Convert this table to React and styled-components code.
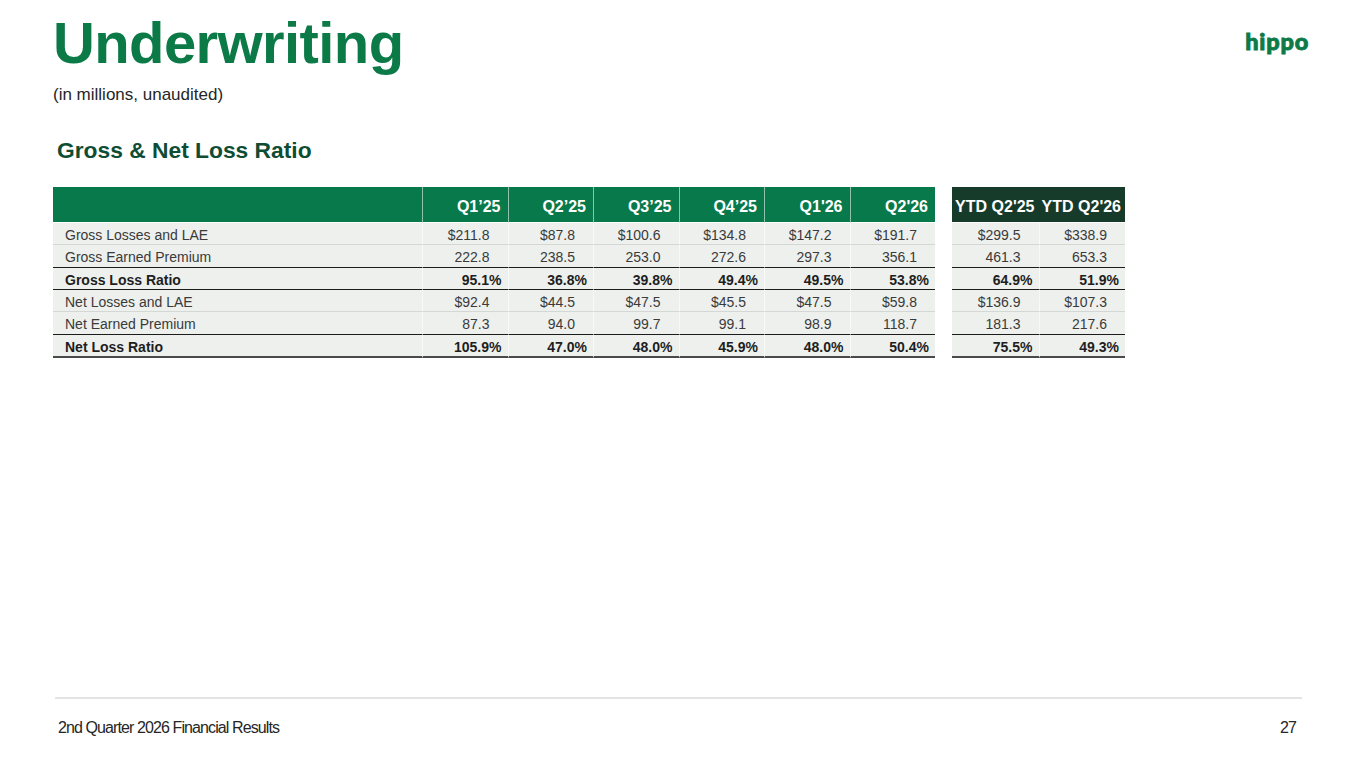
import React from "react";
import styled, { createGlobalStyle } from "styled-components";

const GlobalStyle = createGlobalStyle`
  html, body { margin: 0; padding: 0; background: #ffffff; }
  body { font-family: "Liberation Sans", Arial, sans-serif; }
  * { box-sizing: border-box; }
`;

const Page = styled.div`
  width: 1365px;
  height: 768px;
  overflow: hidden;
  background: #ffffff;
  display: flex;
  flex-direction: column;
  padding: 14px 57px 30px 53px;
  font-family: "Liberation Sans", Arial, sans-serif;
`;

const HeaderRow = styled.header`
  display: flex;
  justify-content: space-between;
  align-items: flex-start;
`;

const Title = styled.h1`
  margin: 0;
  font-size: 58px;
  line-height: 58px;
  font-weight: 700;
  letter-spacing: -0.6px;
  color: #0b7a47;
`;

const Logo = styled.div`
  margin-top: 13.5px;
  font-family: Lato, "Noto Sans", sans-serif;
  font-weight: 900;
  font-size: 23.5px;
  line-height: 26px;
  letter-spacing: 0.8px;
  margin-right: -1px;
  color: #0b7a47;
  -webkit-text-stroke: 0.9px #0b7a47;
`;

const Subtitle = styled.div`
  margin-top: 13px;
  font-size: 17px;
  line-height: 20px;
  color: #262626;
`;

const SectionTitle = styled.h2`
  margin: 32px 0 0 4px;
  font-size: 22.8px;
  line-height: 26px;
  font-weight: 700;
  color: #0e4d33;
`;

const Table = styled.table`
  margin-top: 24px;
  border-collapse: separate;
  border-spacing: 0;
  table-layout: fixed;
  width: 1072px;
  font-size: 14px;
`;

const HeadCell = styled.th`
  padding: 10px ${(p) => (p.$kind === "ytd" ? "4px" : "7px")} 6px 0;
  line-height: 19px;
  font-size: 16px;
  font-weight: 700;
  color: #ffffff;
  text-align: right;
  white-space: nowrap;
  background: ${(p) => (p.$kind === "ytd" ? "#163b2b" : "#08794a")};
  border-left: ${(p) =>
    p.$kind === "q" ? "1px solid rgba(255,255,255,0.55)" : "0"};
  border-bottom: 1px solid #ffffff;
`;

const Gap = styled.td`
  padding: 0;
  background: transparent;
  border: 0;
`;

const ruleColor = {
  light: "1px solid #d3d8d4",
  dark: "1px solid #1c1c1c",
  bottom: "2px solid #4a4a4a",
};

const LabelCell = styled.td`
  padding: 4px 0 0 12px;
  line-height: 17.33px;
  background: #edf0ed;
  color: ${(p) => (p.$strong ? "#1e1e1e" : "#3a3a3a")};
  font-weight: ${(p) => (p.$strong ? 700 : 400)};
  border-bottom: ${(p) => ruleColor[p.$rule]};
  white-space: nowrap;
`;

const ValueCell = styled.td`
  padding: 4px ${(p) => (p.$strong ? "6px" : "18px")} 0 0;
  line-height: 17.33px;
  text-align: right;
  background: #edf0ed;
  color: ${(p) => (p.$strong ? "#1e1e1e" : "#3a3a3a")};
  font-weight: ${(p) => (p.$strong ? 700 : 400)};
  border-bottom: ${(p) => ruleColor[p.$rule]};
  border-left: ${(p) => (p.$first ? "0" : "1px solid #f8faf8")};
  white-space: nowrap;
`;

const Footer = styled.footer`
  margin-top: auto;
`;

const Rule = styled.div`
  height: 2px;
  background: #e2e4e3;
  margin: 0 6px 0 2px;
`;

const FooterRow = styled.div`
  display: flex;
  justify-content: space-between;
  margin-top: 19px;
  padding: 0 12px 0 5px;
  font-size: 16px;
  line-height: 20px;
  letter-spacing: -0.9px;
  color: #262626;
`;

const quarters = ["Q1\u201925", "Q2\u201925", "Q3\u201925", "Q4\u201925", "Q1'26", "Q2'26"];
const ytd = ["YTD Q2'25", "YTD Q2'26"];

const rows = [
  {
    label: "Gross Losses and LAE",
    rule: "light",
    q: ["$211.8", "$87.8", "$100.6", "$134.8", "$147.2", "$191.7"],
    y: ["$299.5", "$338.9"],
  },
  {
    label: "Gross Earned Premium",
    rule: "dark",
    q: ["222.8", "238.5", "253.0", "272.6", "297.3", "356.1"],
    y: ["461.3", "653.3"],
  },
  {
    label: "Gross Loss Ratio",
    strong: true,
    rule: "dark",
    q: ["95.1%", "36.8%", "39.8%", "49.4%", "49.5%", "53.8%"],
    y: ["64.9%", "51.9%"],
  },
  {
    label: "Net Losses and LAE",
    rule: "light",
    q: ["$92.4", "$44.5", "$47.5", "$45.5", "$47.5", "$59.8"],
    y: ["$136.9", "$107.3"],
  },
  {
    label: "Net Earned Premium",
    rule: "dark",
    q: ["87.3", "94.0", "99.7", "99.1", "98.9", "118.7"],
    y: ["181.3", "217.6"],
  },
  {
    label: "Net Loss Ratio",
    strong: true,
    rule: "bottom",
    q: ["105.9%", "47.0%", "48.0%", "45.9%", "48.0%", "50.4%"],
    y: ["75.5%", "49.3%"],
  },
];

export default function App() {
  return (
    <>
      <GlobalStyle />
      <Page>
        <HeaderRow>
          <div>
            <Title>Underwriting</Title>
            <Subtitle>(in millions, unaudited)</Subtitle>
          </div>
          <Logo>hippo</Logo>
        </HeaderRow>
        <SectionTitle>Gross &amp; Net Loss Ratio</SectionTitle>
        <Table>
          <colgroup>
            <col style={{ width: 369 }} />
            {quarters.map((q) => (
              <col key={q} style={{ width: 85.5 }} />
            ))}
            <col style={{ width: 17 }} />
            {ytd.map((y) => (
              <col key={y} style={{ width: 86.5 }} />
            ))}
          </colgroup>
          <thead>
            <tr>
              <HeadCell $kind="label" />
              {quarters.map((q) => (
                <HeadCell key={q} $kind="q">
                  {q}
                </HeadCell>
              ))}
              <Gap />
              {ytd.map((y) => (
                <HeadCell key={y} $kind="ytd">
                  {y}
                </HeadCell>
              ))}
            </tr>
          </thead>
          <tbody>
            {rows.map((r) => (
              <tr key={r.label}>
                <LabelCell $strong={r.strong} $rule={r.rule}>
                  {r.label}
                </LabelCell>
                {r.q.map((v, i) => (
                  <ValueCell key={i} $strong={r.strong} $rule={r.rule}>
                    {v}
                  </ValueCell>
                ))}
                <Gap />
                {r.y.map((v, i) => (
                  <ValueCell
                    key={i}
                    $first={i === 0}
                    $strong={r.strong}
                    $rule={r.rule}
                  >
                    {v}
                  </ValueCell>
                ))}
              </tr>
            ))}
          </tbody>
        </Table>
        <Footer>
          <Rule />
          <FooterRow>
            <span>2nd Quarter 2026 Financial Results</span>
            <span>27</span>
          </FooterRow>
        </Footer>
      </Page>
    </>
  );
}
